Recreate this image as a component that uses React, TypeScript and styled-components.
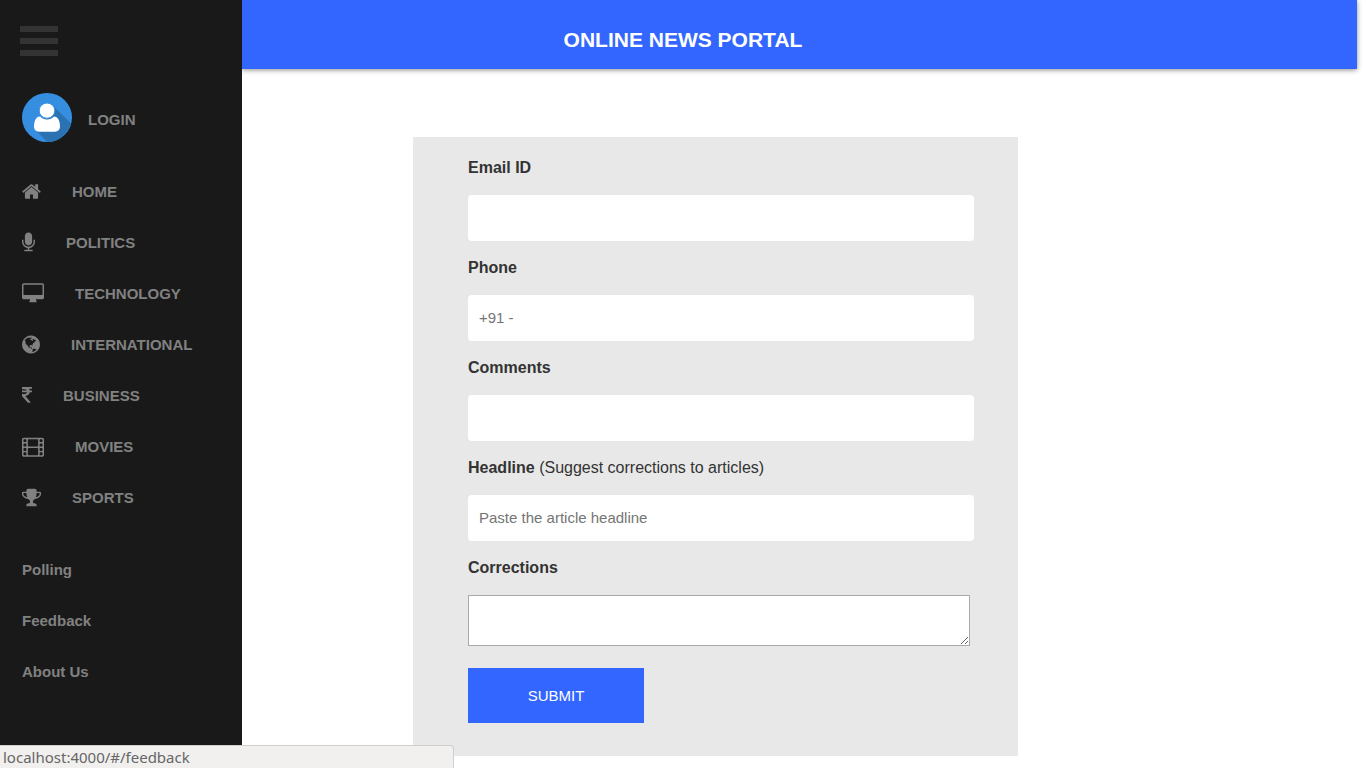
import React from "react";
import styled, { createGlobalStyle } from "styled-components";

const GlobalStyle = createGlobalStyle`
  *, *::before, *::after { box-sizing: border-box; }
  body {
    margin: 0;
    background: #fff;
    color: #333;
    font: 15px/24px "Liberation Sans", Arial, sans-serif;
  }
`;

const Page = styled.div`
  display: flex;
  min-height: 100vh;
`;

const Sidebar = styled.aside`
  flex: 0 0 242px;
  padding: 26px 22px 0;
  background: #191919;
  z-index: 1;
`;

const MenuButton = styled.button`
  display: flex;
  flex-direction: column;
  gap: 6px;
  width: 38px;
  margin: 0 0 36px -2px;
  padding: 0;
  border: 0;
  background: none;
  cursor: pointer;
`;

const MenuBar = styled.span`
  height: 6px;
  background: #333;
`;

const SideLink = styled.a`
  display: flex;
  align-items: center;
  gap: 31px;
  height: 51px;
  color: #818181;
  font-weight: bold;
  text-decoration: none;

  &:hover { color: #f1f1f1; }
`;

const LoginLink = styled(SideLink)`
  gap: 16px;
  margin-bottom: 23px;

  span { padding-top: 4px; }
`;

const LinkGroup = styled.nav`
  & + & { margin-top: 21px; }
`;

const Glyph = styled.svg<{ $width: number }>`
  flex: none;
  width: ${(p) => p.$width}px;
  height: 21px;
  fill: currentColor;
`;

const Content = styled.div`
  flex: 1;
  min-width: 0;
`;

const Header = styled.header`
  height: 69px;
  margin-right: 9px;
  padding: 28px 233px 0 0;
  background: #36f;
  box-shadow: 0 1px 5px rgba(0, 0, 0, 0.45);
  color: #fff;
  text-align: center;
`;

const Title = styled.h1`
  margin: 0;
  font-size: 21px;
  line-height: 24px;
`;

const FeedbackForm = styled.form`
  width: 605px;
  max-width: 100%;
  margin: 68px 0 12px 171px;
  padding: 19px 44px 33px 55px;
  background: #e8e8e8;
`;

const Field = styled.div`
  display: flex;
  flex-direction: column;
  gap: 15px;
  margin-bottom: 15px;
`;

const FieldLabel = styled.label`
  font-size: 16px;
`;

const TextInput = styled.input`
  height: 46px;
  padding: 0 11px 2px;
  border: 0;
  border-radius: 4px;
  background: #fff;
  font: inherit;

  &::placeholder { color: #757575; }
`;

const TextArea = styled.textarea`
  height: 51px;
  margin: 0 4px 7px 0;
  padding: 2px;
  border: 1px solid #a9a9a9;
  background: #fff;
  font: inherit;
`;

const SubmitButton = styled.button`
  display: block;
  width: 176px;
  height: 55px;
  border: 0;
  background: #36f;
  color: #fff;
  font: inherit;
  cursor: pointer;
`;

const StatusBubble = styled.div`
  position: fixed;
  left: 0;
  bottom: 0;
  z-index: 2;
  width: 454px;
  height: 23px;
  padding: 0 3px;
  border: solid #cfcfcf;
  border-width: 1px 1px 0 0;
  border-top-right-radius: 4px;
  background: #f1f0ee;
  color: #666;
  font: 15px/22px "Noto Sans", "Open Sans", sans-serif;
`;

type SectionIcon = { box: string; width: number; d: string };

const filmHoles = [256, 640, 1024, 1408]
  .flatMap((y) => [128, 1536].map((x) => `M${x + 64} ${y}h128q64 0 64 64v128q0 64-64 64h-128q-64 0-64-64v-128q0-64 64-64z`))
  .join("");

const icons: Record<string, SectionIcon> = {
  home: {
    box: "64 0 1664 1792",
    width: 19,
    d: "M1472 992v480q0 26-19 45t-45 19h-384v-384h-256v384h-384q-26 0-45-19t-19-45v-480q0-1 .5-3t.5-3l575-474 575 474q1 2 1 6zm223-69l-62 74q-8 9-21 11h-3q-13 0-21-7l-692-577-692 577q-12 8-24 7-13-2-21-11l-62-74q-8-10-7-23.5t11-21.5l719-599q32-26 76-26t76 26l244 204v-195q0-14 9-23t23-9h192q14 0 23 9t9 23v408l219 182q10 8 11 21.5t-7 23.5z",
  },
  microphone: {
    box: "320 0 1152 1792",
    width: 13,
    d: "M1472 704v128q0 221-147.5 384.5t-364.5 187.5v132h256q26 0 45 19t19 45-19 45-45 19h-640q-26 0-45-19t-19-45 19-45 45-19h256v-132q-217-24-364.5-187.5t-147.5-384.5v-128q0-26 19-45t45-19 45 19 19 45v128q0 185 131.5 316.5t316.5 131.5 316.5-131.5 131.5-316.5v-128q0-26 19-45t45-19 45 19 19 45zm-256-384v512q0 132-94 226t-226 94-226-94-94-226v-512q0-132 94-226t226-94 226 94 94 226z",
  },
  desktop: {
    box: "-64 0 1920 1792",
    width: 22,
    d: "M1728 992v-832q0-13-9.5-22.5t-22.5-9.5h-1600q-13 0-22.5 9.5t-9.5 22.5v832q0 13 9.5 22.5t22.5 9.5h1600q13 0 22.5-9.5t9.5-22.5zm128-832v1088q0 66-47 113t-113 47h-544q0 37 16 77.5t32 71 16 43.5q0 26-19 45t-45 19h-512q-26 0-45-19t-19-45q0-14 16-44t32-70 16-78h-544q-66 0-113-47t-47-113v-1088q0-66 47-113t113-47h1600q66 0 113 47t47 113z",
  },
  globe: {
    box: "128 0 1536 1792",
    width: 18,
    d: "M896 128q209 0 385.5 103t279.5 279.5 103 385.5-103 385.5-279.5 279.5-385.5 103-385.5-103-279.5-279.5-103-385.5 103-385.5 279.5-279.5 385.5-103zm274 521q-2 1-9.5 9.5t-13.5 9.5q2 0 4.5-5t5-11 3.5-7q6-7 22-15 14-6 52-12 34-8 51 11-2-2 9.5-13t14.5-12q3-2 15-4.5t15-7.5l2-22q-12 1-17.5-7t-6.5-21q0 2-6 8 0-7-4.5-8t-11.5 1-9 1q-10-3-15-7.5t-8-16.5-4-15q-2-5-9.5-11t-9.5-10q-1-2-2.5-5.5t-3-6.5-4-5.5-5.5-2.5-7 5-7.5 10-4.5 5q-3-2-6-1.5t-4.5 1-4.5 3-5 3.5q-3 2-8.5 3t-8.5 2q15-5-1-11-10-4-16-3 9-4 7.5-12t-8.5-14h5q-1-4-8.5-8.5t-17.5-8.5-13-6q-8-5-34-9.5t-33-.5q-5 6-4.5 10.5t4 14 3.5 12.5q1 6-5.5 13t-6.5 12q0 7 14 15.5t10 21.5q-3 8-16 16t-16 12q-5 8-1.5 18.5t10.5 16.5q2 2 1.5 4t-3.5 4.5-5.5 4-6.5 3.5l-3 2q-11 5-20.5-6t-13.5-26q-7-25-16-30-23-8-29 1-5-13-41-26-25-9-58-4 6-1 0-15-7-15-19-12 3-6 4-17.5t1-13.5q3-13 12-23 1-1 7-8.5t9.5-13.5.5-6q35 4 50-11 5-5 11.5-17t10.5-17q9-6 14-5.5t14.5 5.5 14.5 5q14 1 15.5-11t-7.5-20q12 1 3-17-4-7-8-9-12-4-27 5-8 4 2 8-1-1-9.5 10.5t-16.5 17.5-16-5q-1-1-5.5-13.5t-9.5-13.5q-8 0-16 15 3-8-11-15t-24-8q19-12-8-27-7-4-20.5-5t-19.5 4q-5 7-5.5 11.5t5 8 10.5 5.5 11.5 4 8.5 3q14 10 8 14-2 1-8.5 3.5t-11.5 4.5-6 4q-3 4 0 14t-2 14q-5-5-9-17.5t-7-16.5q7 9-25 6l-10-1q-4 0-16 2t-20.5 1-13.5-8q-4-8 0-20 1-4 4-2-4-3-11-9.5t-10-8.5q-46 15-94 41 6 1 12-1 5-2 13-6.5t10-5.5q34-14 42-7l5-5q14 16 20 25-7-4-30-1-20 6-22 12 7 12 5 18-4-3-11.5-10t-14.5-11-15-5q-16 0-22 1-146 80-235 222 7 7 12 8 4 1 5 9t2.5 11 11.5-3q9 8 3 19 1-1 44 27 19 17 21 21 3 11-10 18-1-2-9-9t-9-4q-3 5 .5 18.5t10.5 12.5q-7 0-9.5 16t-2.5 35.5-1 23.5l2 1q-3 12 5.5 34.5t21.5 19.5q-13 3 20 43 6 8 8 9 3 2 12 7.5t15 10 10 10.5q4 5 10 22.5t14 23.5q-2 6 9.5 20t10.5 23q-1 0-2.5 1t-2.5 1q3 7 15.5 14t15.5 13q1 3 2 10t3 11 8 2q2-20-24-62-15-25-17-29-3-5-5.5-15.5t-4.5-14.5q2 0 6 1.5t8.5 3.5 7.5 4 2 3q-3 7 2 17.5t12 18.5 17 19 12 13q6 6 14 19.5t0 13.5q9 0 20 10t17 20q5 8 8 26t5 24q2 7 8.5 13.5t12.5 9.5l16 8 13 7q5 2 18.5 10.5t21.5 11.5q10 4 16 4t14.5-2.5 13.5-3.5q15-2 29 15t21 21q36 19 55 11-2 1 .5 7.5t8 15.5 9 14.5 5.5 8.5q5 6 18 15t18 15q6-4 7-9-3 8 7 20t18 10q14-3 14-32-31 15-49-18 0-1-2.5-5.5t-4-8.5-2.5-8.5 0-7.5 5-3q9 0 10-3.5t-2-12.5-4-13q-1-8-11-20t-12-15q-5 9-16 8t-16-9q0 1-1.5 5.5t-1.5 6.5q-13 0-15-1 1-3 2.5-17.5t3.5-22.5q1-4 5.5-12t7.5-14.5 4-12.5-4.5-9.5-17.5-2.5q-19 1-26 20-1 3-3 10.5t-5 11.5-9 7q-7 3-24 2t-24-5q-13-8-22.5-29t-9.5-37q0-10 2.5-26.5t3-25-5.5-24.5q3-2 9-9.5t10-10.5q2-1 4.5-1.5t4.5 0 4-1.5 3-6q-1-1-4-3-3-3-4-3 7 3 28.5-1.5t27.5 1.5q15 11 22-2 0-1-2.5-9.5t-.5-13.5q5 27 29 9 3 3 15.5 5t17.5 5q3 2 7 5.5t5.5 4.5 5-.5 8.5-6.5q10 14 12 24 11 40 19 44 7 3 11 2t4.5-9.5 0-14-1.5-12.5l-1-8v-18l-1-8q-15-3-18.5-12t1.5-18.5 15-18.5q1-1 8-3.5t15.5-6.5 12.5-8q21-19 15-35 7 0 11-9-1 0-5-3t-7.5-5-4.5-2q9-5 2-16 5-3 7.5-11t7.5-10q9 12 21 2 7-8 1-16 5-7 20.5-10.5t18.5-9.5q7 2 8-2t1-12 3-12q4-5 15-9t13-5l17-11q3-4 0-4 18 2 31-11 10-11-6-20 3-6-3-9.5t-15-5.5q3-1 11.5-.5t10.5-1.5q15-10-7-16-17-5-43 12zm-163 877q206-36 351-189-3-3-12.5-4.5t-12.5-3.5q-18-7-24-8 1-7-2.5-13t-8-9-12.5-8-11-7q-2-2-7-6t-7-5.5-7.5-4.5-8.5-2-10 1l-3 1q-3 1-5.5 2.5t-5.5 3-4 3 0 2.5q-21-17-36-22-5-1-11-5.5t-10.5-7-10-1.5-11.5 7q-5 5-6 15t-2 13q-7-5 0-17.5t2-18.5q-3-6-10.5-4.5t-12 4.5-11.5 8.5-9 6.5-8.5 5.5-8.5 7.5q-3 4-6 12t-5 11q-2-4-11.5-6.5t-9.5-5.5q2 10 4 35t5 38q7 31-12 48-27 25-29 40-4 22 12 26 0 7-8 20.5t-7 21.5q0 6 2 16z",
  },
  rupee: {
    box: "447 0 898 1792",
    width: 10,
    d: "M1345 470v102q0 14-9 23t-23 9h-168q-23 144-129 234t-276 110q167 178 459 536 14 16 4 34-8 18-29 18h-195q-16 0-25-12-306-367-498-571-9-9-9-22v-127q0-13 9.5-22.5t22.5-9.5h112q132 0 212.5-43t102.5-125h-427q-14 0-23-9t-9-23v-102q0-14 9-23t23-9h413q-57-113-268-113h-145q-13 0-22.5-9.5t-9.5-22.5v-133q0-14 9-23t23-9h832q14 0 23 9t9 23v102q0 14-9 23t-23 9h-233q47 61 64 144h171q14 0 23 9t9 23z",
  },
  film: {
    box: "0 0 1920 1792",
    width: 22,
    d: `M160 128h1600q66 0 113 47t47 113v1344q0 66-47 113t-113 47h-1600q-66 0-113-47t-47-113v-1344q0-66 47-113t113-47z${filmHoles}M576 256h768q64 0 64 64v512q0 64-64 64h-768q-64 0-64-64v-512q0-64 64-64zM576 1024h768q64 0 64 64v512q0 64-64 64h-768q-64 0-64-64v-512q0-64 64-64z`,
  },
  trophy: {
    box: "64 0 1664 1792",
    width: 19,
    d: "M522 883q-74-162-74-371h-256v96q0 78 94.5 162t235.5 113zm1078-275v-96h-256q0 209-74 371 141-29 235.5-113t94.5-162zm128-128v128q0 71-41.5 143t-112 130-173 97.5-215.5 44.5q-42 54-95 95-38 34-52.5 72.5t-14.5 89.5q0 54 30.5 91t97.5 37q75 0 133.5 45.5t58.5 114.5v64q0 14-9 23t-23 9h-832q-14 0-23-9t-9-23v-64q0-69 58.5-114.5t133.5-45.5q67 0 97.5-37t30.5-91q0-51-14.5-89.5t-52.5-72.5q-53-41-95-95-113-5-215.5-44.5t-173-97.5-112-130-41.5-143v-128q0-40 28-68t68-28h288v-96q0-66 47-113t113-47h576q66 0 113 47t47 113v96h288q40 0 68 28t28 68z",
  },
};

const sections = [
  { label: "HOME", icon: icons.home },
  { label: "POLITICS", icon: icons.microphone },
  { label: "TECHNOLOGY", icon: icons.desktop },
  { label: "INTERNATIONAL", icon: icons.globe },
  { label: "BUSINESS", icon: icons.rupee },
  { label: "MOVIES", icon: icons.film },
  { label: "SPORTS", icon: icons.trophy },
];

const pages = [
  { label: "Polling", href: "#/polling" },
  { label: "Feedback", href: "#/feedback" },
  { label: "About Us", href: "#/about" },
];

const fields = [
  { id: "email", type: "email", label: "Email ID" },
  { id: "phone", type: "tel", label: "Phone", placeholder: "+91 -" },
  { id: "comments", type: "text", label: "Comments" },
  {
    id: "headline",
    type: "text",
    label: "Headline",
    hint: " (Suggest corrections to articles)",
    placeholder: "Paste the article headline",
  },
];

const Avatar = () => (
  <svg width="50" height="49" viewBox="0 0 50 50" preserveAspectRatio="none" aria-hidden="true">
    <defs>
      <clipPath id="avatar-disc">
        <circle cx="25" cy="25" r="25" />
      </clipPath>
    </defs>
    <g clipPath="url(#avatar-disc)">
      <rect width="50" height="50" fill="#368ee0" />
      <path d="M31 13 52 34V52H27L14 38Z" fill="#2b72b3" />
      <path
        d="M18 24C14 24 12 29 12 34C12 37.500 14 39.500 17 39.500H33C36 39.500 38 37.500 38 34C38 29 36 24 32 24C30 26 28 27 25 27S20 26 18 24Z"
        fill="#fff"
      />
      <circle cx="25" cy="18" r="7.8" fill="#fff" stroke="#368ee0" strokeWidth="1" />
    </g>
  </svg>
);

export default function App() {
  return (
    <>
      <GlobalStyle />
      <Page>
        <Sidebar>
          <MenuButton type="button" aria-label="Menu">
            <MenuBar />
            <MenuBar />
            <MenuBar />
          </MenuButton>
          <LoginLink href="#/login">
            <Avatar />
            <span>LOGIN</span>
          </LoginLink>
          <LinkGroup aria-label="Sections">
            {sections.map(({ label, icon }) => (
              <SideLink key={label} href={`#/${label.toLowerCase()}`}>
                <Glyph $width={icon.width} viewBox={icon.box} aria-hidden="true">
                  <path fillRule="evenodd" d={icon.d} />
                </Glyph>
                {label}
              </SideLink>
            ))}
          </LinkGroup>
          <LinkGroup aria-label="Pages">
            {pages.map(({ label, href }) => (
              <SideLink key={label} href={href}>
                {label}
              </SideLink>
            ))}
          </LinkGroup>
        </Sidebar>
        <Content>
          <Header>
            <Title>ONLINE NEWS PORTAL</Title>
          </Header>
          <main>
            <FeedbackForm onSubmit={(e: React.FormEvent) => e.preventDefault()}>
              {fields.map(({ id, type, label, hint, placeholder }) => (
                <Field key={id}>
                  <FieldLabel htmlFor={id}>
                    <b>{label}</b>
                    {hint}
                  </FieldLabel>
                  <TextInput id={id} type={type} placeholder={placeholder} />
                </Field>
              ))}
              <Field>
                <FieldLabel htmlFor="corrections">
                  <b>Corrections</b>
                </FieldLabel>
                <TextArea id="corrections" />
              </Field>
              <SubmitButton type="submit">SUBMIT</SubmitButton>
            </FeedbackForm>
          </main>
        </Content>
      </Page>
      <StatusBubble>localhost:4000/#/feedback</StatusBubble>
    </>
  );
}
